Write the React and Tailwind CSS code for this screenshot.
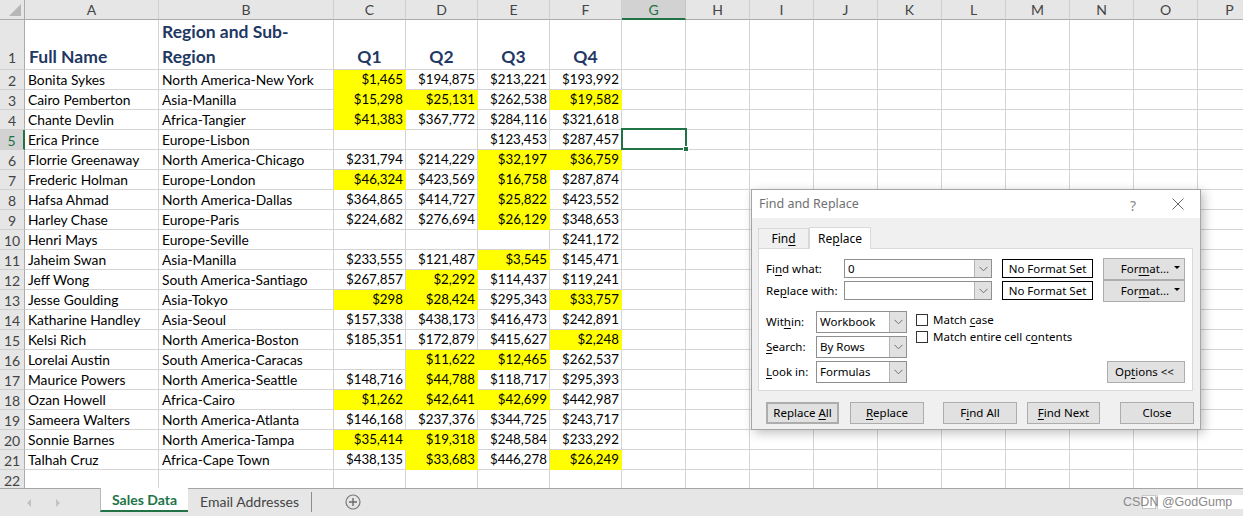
import React from "react";

const COLS = [
  ["A", "w-[134px]"],
  ["B", "w-[175px]"],
  ["C", "w-[72px]"],
  ["D", "w-[72px]"],
  ["E", "w-[72px]"],
  ["F", "w-[72px]"],
  ["G", "w-[64px]"],
  ["H", "w-[64px]"],
  ["I", "w-[64px]"],
  ["J", "w-[64px]"],
  ["K", "w-[64px]"],
  ["L", "w-[64px]"],
  ["M", "w-[64px]"],
  ["N", "w-[64px]"],
  ["O", "w-[64px]"],
  ["P", "w-[64px]"],
];

// '*' prefix = yellow fill
const DATA = [
  ["Bonita Sykes", "North America-New York", "*$1,465", "$194,875", "$213,221", "$193,992"],
  ["Cairo Pemberton", "Asia-Manilla", "*$15,298", "*$25,131", "$262,538", "*$19,582"],
  ["Chante Devlin", "Africa-Tangier", "*$41,383", "$367,772", "$284,116", "$321,618"],
  ["Erica Prince", "Europe-Lisbon", "", "", "$123,453", "$287,457"],
  ["Florrie Greenaway", "North America-Chicago", "$231,794", "$214,229", "*$32,197", "*$36,759"],
  ["Frederic Holman", "Europe-London", "*$46,324", "$423,569", "*$16,758", "$287,874"],
  ["Hafsa Ahmad", "North America-Dallas", "$364,865", "$414,727", "*$25,822", "$423,552"],
  ["Harley Chase", "Europe-Paris", "$224,682", "$276,694", "*$26,129", "$348,653"],
  ["Henri Mays", "Europe-Seville", "", "", "", "$241,172"],
  ["Jaheim Swan", "Asia-Manilla", "$233,555", "$121,487", "*$3,545", "$145,471"],
  ["Jeff Wong", "South America-Santiago", "$267,857", "*$2,292", "$114,437", "$119,241"],
  ["Jesse Goulding", "Asia-Tokyo", "*$298", "*$28,424", "$295,343", "*$33,757"],
  ["Katharine Handley", "Asia-Seoul", "$157,338", "$438,173", "$416,473", "$242,891"],
  ["Kelsi Rich", "North America-Boston", "$185,351", "$172,879", "$415,627", "*$2,248"],
  ["Lorelai Austin", "South America-Caracas", "", "*$11,622", "*$12,465", "$262,537"],
  ["Maurice Powers", "North America-Seattle", "$148,716", "*$44,788", "$118,717", "$295,393"],
  ["Ozan Howell", "Africa-Cairo", "*$1,262", "*$42,641", "*$42,699", "$442,987"],
  ["Sameera Walters", "North America-Atlanta", "$146,168", "$237,376", "$344,725", "$243,717"],
  ["Sonnie Barnes", "North America-Tampa", "*$35,414", "*$19,318", "$248,584", "$233,292"],
  ["Talhah Cruz", "Africa-Cape Town", "$438,135", "*$33,683", "$446,278", "*$26,249"],
];

function RowHead({ n, tall, sel }) {
  return (
    <div
      className={
        "w-[25px] shrink-0 border-b border-b-[#d0d0d0] flex justify-center text-[14px] " +
        (tall ? "items-end pb-[1px] " : "items-center pt-[1px] ") +
        (sel
          ? "bg-[#d2d2d2] text-[#217346] border-r-2 border-r-[#217346]"
          : "bg-[#e6e6e6] text-[#444] border-r border-r-[#ababab]")
      }
    >
      {n}
    </div>
  );
}

function DataRow({ n, row }) {
  const sel = n === 5;
  return (
    <div className="flex h-[20px] shrink-0">
      <RowHead n={n} sel={sel} />
      {COLS.map(([k, w], i) => {
        let v = i < 6 && row ? row[i] : "";
        let yellow = false;
        if (v && v.startsWith("*")) {
          yellow = true;
          v = v.slice(1);
        }
        const num = i >= 2;
        return (
          <div
            key={k}
            className={
              w +
              " shrink-0 relative border-r border-b flex items-center pt-[1px] whitespace-nowrap " +
              (num ? "justify-end pr-[2px] text-[13.3px] " : "pl-[3px] text-[13.8px] ") +
              (yellow ? "bg-[#ffff00] border-[#ffff00]" : "border-[#d4d4d4]")
            }
          >
            {v}
            {sel && k === "G" && (
              <div className="absolute -left-[1px] -top-[2px] w-[66px] h-[22px] border-2 border-[#217346] z-10">
                <div className="absolute -right-[4px] -bottom-[4px] w-[6px] h-[6px] bg-[#217346] border border-white" />
              </div>
            )}
          </div>
        );
      })}
    </div>
  );
}

function Chevron() {
  return (
    <svg width="9" height="6" viewBox="0 0 9 6">
      <path d="M0.5 0.8 L4.5 4.8 L8.5 0.8" fill="none" stroke="#6e6e6e" strokeWidth="1" />
    </svg>
  );
}

function Combo({ value, w }) {
  return (
    <div className={"h-[19px] border border-[#8f8f8f] bg-white flex " + w}>
      <div className="flex-1 pl-[3px] flex items-center">{value}</div>
      <div className="w-[17px] bg-[#e1e1e1] border-l border-[#b4b4b4] flex items-center justify-center">
        <Chevron />
      </div>
    </div>
  );
}

function Select({ value }) {
  return (
    <div className="w-[91px] h-[22px] border border-[#8f8f8f] bg-white flex">
      <div className="flex-1 pl-[3px] flex items-center">{value}</div>
      <div className="w-[17px] bg-[#e1e1e1] border-l border-[#b4b4b4] flex items-center justify-center">
        <Chevron />
      </div>
    </div>
  );
}

function Btn({ children, w, className = "" }) {
  return (
    <div
      className={
        "h-[22px] bg-[#e1e1e1] border border-[#adadad] flex items-center justify-center whitespace-pre " +
        w +
        " " +
        className
      }
    >
      {children}
    </div>
  );
}

function U({ children }) {
  return <span className="underline underline-offset-[2px]">{children}</span>;
}

function FormatBtn() {
  return (
    <Btn w="w-[82px] h-[19px] ml-[10px] relative">
      <span className="pl-[2px]">
        For<U>m</U>at...
      </span>
      <span className="absolute right-[4px] top-[7px] w-0 h-0 border-l-[3px] border-r-[3px] border-t-[3px] border-l-transparent border-r-transparent border-t-black" />
    </Btn>
  );
}

function Dialog() {
  return (
    <div className="absolute left-[751px] top-[189px] w-[450px] h-[241px] border border-[#a5a5a5] bg-white shadow-[3px_3px_10px_rgba(0,0,0,0.25)] flex flex-col font-['Noto_Sans',sans-serif] text-[11.5px] text-black z-20">
      <div className="h-[28px] shrink-0 flex items-center pl-[7px] relative">
        <span className="text-[12.5px] text-[#6f6f6f]">Find and Replace</span>
        <span className="absolute left-[378px] top-[5px] text-[14px] text-[#8a8a8a]">?</span>
        <svg className="absolute left-[420px] top-[8px]" width="12" height="12" viewBox="0 0 12 12">
          <path d="M0.5 0.5 L11.5 11.5 M11.5 0.5 L0.5 11.5" stroke="#6a6a6a" strokeWidth="1" />
        </svg>
      </div>
      <div className="flex-1 bg-[#f0f0f0] pl-[6px] pt-[8px]">
        <div className="flex items-end h-[22px]">
          <div className="w-[51px] h-[20px] border border-b-0 border-[#d9d9d9] flex items-center justify-center text-[12px]">
            Fin<U>d</U>
          </div>
          <div className="w-[62px] h-[22px] bg-white border border-b-0 border-[#d9d9d9] flex items-center justify-center text-[12px] -mb-px relative z-10">
            Re<U>p</U>lace
          </div>
        </div>
        <div className="w-[435px] h-[143px] bg-white border border-[#d9d9d9] pl-[7px] pt-[10px]">
          <div className="flex items-center h-[19px]">
            <div className="w-[78px]">
              Fi<U>n</U>d what:
            </div>
            <Combo value="0" w="w-[148px]" />
            <div className="ml-[10px] w-[91px] h-[19px] border border-black flex items-center justify-center">
              No Format Set
            </div>
            <FormatBtn />
          </div>
          <div className="flex items-center h-[19px] mt-[3px]">
            <div className="w-[78px]">
              Re<U>p</U>lace with:
            </div>
            <Combo value="" w="w-[148px]" />
            <div className="ml-[10px] w-[91px] h-[19px] border border-black flex items-center justify-center">
              No Format Set
            </div>
            <FormatBtn />
          </div>
          <div className="flex mt-[11px]">
            <div className="flex flex-col gap-[3px]">
              <div className="flex items-center">
                <div className="w-[50px]">
                  Wit<U>h</U>in:
                </div>
                <Select value="Workbook" />
              </div>
              <div className="flex items-center">
                <div className="w-[50px]">
                  <U>S</U>earch:
                </div>
                <Select value="By Rows" />
              </div>
              <div className="flex items-center">
                <div className="w-[50px]">
                  <U>L</U>ook in:
                </div>
                <Select value="Formulas" />
              </div>
            </div>
            <div className="ml-[9px] pt-[3px] flex flex-col gap-[5px]">
              <div className="flex items-center h-[12px] whitespace-pre">
                <div className="w-[12px] h-[12px] border border-[#333] bg-white mr-[5px]" />
                {"Match "}
                <U>c</U>
                {"ase"}
              </div>
              <div className="flex items-center h-[12px] whitespace-pre">
                <div className="w-[12px] h-[12px] border border-[#333] bg-white mr-[5px]" />
                {"Match entire cell c"}
                <U>o</U>
                {"ntents"}
              </div>
            </div>
            <div className="flex-1" />
            <Btn w="w-[78px] self-end mr-[7px]">
              {"Op"}
              <U>t</U>
              {"ions << "}
            </Btn>
          </div>
        </div>
        <div className="flex mt-[11px] ml-[8px] h-[22px]">
          <Btn w="w-[73px] border-2 border-[#0078d7]">
            {"Replace "}
            <U>A</U>
            {"ll"}
          </Btn>
          <Btn w="w-[74px] ml-[11px]">
            <U>R</U>
            {"eplace"}
          </Btn>
          <Btn w="w-[74px] ml-[19px]">
            {"F"}
            <U>i</U>
            {"nd All"}
          </Btn>
          <Btn w="w-[73px] ml-[10px]">
            <U>F</U>
            {"ind Next"}
          </Btn>
          <Btn w="w-[74px] ml-[20px]">Close</Btn>
        </div>
      </div>
    </div>
  );
}

function TabBar() {
  return (
    <div className="h-[28px] shrink-0 bg-[#e6e6e6] border-t border-[#a6a6a6] flex relative font-['Lato',sans-serif]">
      <div className="w-[100px] flex items-center">
        <span className="ml-[27px] w-0 h-0 border-t-[4px] border-b-[4px] border-r-[4px] border-t-transparent border-b-transparent border-r-[#c2c2c2]" />
        <span className="ml-[25px] w-0 h-0 border-t-[4px] border-b-[4px] border-l-[4px] border-t-transparent border-b-transparent border-l-[#c2c2c2]" />
      </div>
      <div className="w-[88px] h-[24px] -mt-px bg-white border-l border-[#b9b9b9] border-b-2 border-b-[#217346] flex items-center justify-center text-[14px] font-bold text-[#217346]">
        Sales Data
      </div>
      <div className="w-[123px] h-[24px] flex items-center justify-center text-[14px] text-[#444]">
        Email Addresses
      </div>
      <div className="w-px h-[20px] mt-[3px] bg-[#8c8c8c]" />
      <div className="ml-[33px] flex items-center h-[26px]">
        <svg width="16" height="16" viewBox="0 0 16 16">
          <circle cx="8" cy="8" r="7" fill="none" stroke="#7a7a7a" strokeWidth="1.2" />
          <path d="M8 4 V12 M4 8 H12" stroke="#6a6a6a" strokeWidth="1.4" />
        </svg>
      </div>
      <div className="flex-1" />
      <div className="flex items-center h-[26px]">
        <div className="w-[14px] h-[14px] bg-white border border-[#c8c8c8] mr-px" />
        <div className="w-[86px] h-[14px] bg-white border-l border-[#c8c8c8]" />
      </div>
      <span className="absolute left-[1123px] top-[4px] text-[12.5px] text-[#8a8a8a] font-['Liberation_Sans',sans-serif]">
        CSDN @GodGump
      </span>
    </div>
  );
}

export default function App() {
  return (
    <div className="w-[1243px] h-[516px] overflow-hidden bg-white relative flex flex-col font-['Lato',sans-serif] text-black">
      <div className="h-[488px] overflow-hidden flex flex-col">
        <div className="flex h-[20px] shrink-0">
          <div className="w-[25px] shrink-0 bg-[#e6e6e6] border-r border-b border-[#ababab] relative">
            <svg className="absolute right-[3px] bottom-[3px]" width="12" height="12" viewBox="0 0 12 12">
              <path d="M12 0 L12 12 L0 12 Z" fill="#b6b6b6" />
            </svg>
          </div>
          {COLS.map(([k, w]) => (
            <div
              key={k}
              className={
                w +
                " shrink-0 flex items-center justify-center text-[14px] border-r " +
                (k === "G"
                  ? "bg-[#d2d2d2] text-[#217346] border-r-[#c4c4c4] border-b-2 border-b-[#217346]"
                  : "bg-[#e6e6e6] text-[#444] border-r-[#cfcfcf] border-b border-b-[#ababab]")
              }
            >
              {k}
            </div>
          ))}
        </div>
        <div className="flex h-[50px] shrink-0">
          <RowHead n={1} tall />
          {COLS.map(([k, w], i) => (
            <div
              key={k}
              className={
                w +
                " shrink-0 border-r border-b border-[#d4d4d4] flex items-end text-[17.5px] font-bold text-[#1f3864] leading-[25px] " +
                (i === 0 ? "pl-[4px]" : i === 1 ? "pl-[3px]" : "justify-center")
              }
            >
              {i === 0 && "Full Name"}
              {i === 1 && (
                <span>
                  Region and Sub-
                  <br />
                  Region
                </span>
              )}
              {i >= 2 && i <= 5 && "Q" + (i - 1)}
            </div>
          ))}
        </div>
        {DATA.map((row, idx) => (
          <DataRow key={idx} n={idx + 2} row={row} />
        ))}
        <DataRow n={22} row={null} />
      </div>
      <TabBar />
      <Dialog />
    </div>
  );
}
